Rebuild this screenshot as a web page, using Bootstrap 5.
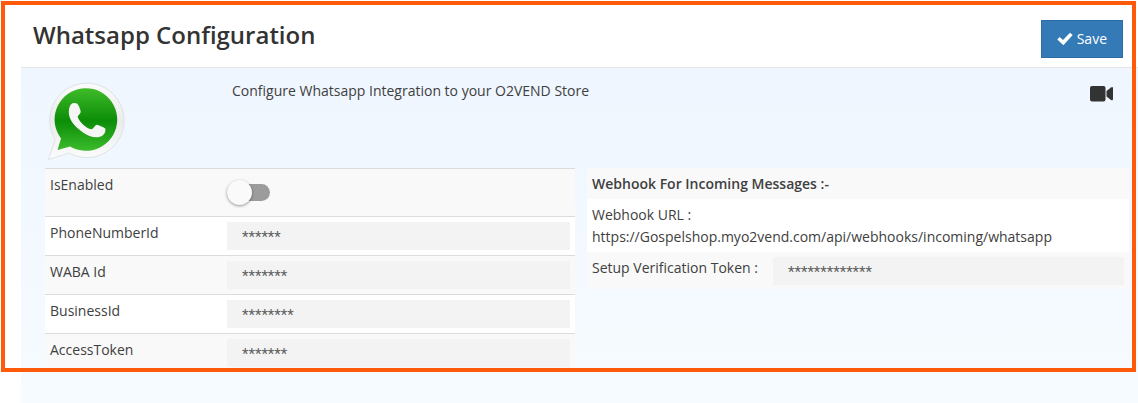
<!DOCTYPE html>
<html lang="en">
<head>
<meta charset="utf-8">
<meta name="viewport" content="width=device-width, initial-scale=1">
<title>Whatsapp Configuration</title>
<link href="https://cdn.jsdelivr.net/npm/bootstrap@5.3.0/dist/css/bootstrap.min.css" rel="stylesheet">
<style>
  body { font-family: "Open Sans", "Noto Sans", sans-serif; font-size: 14px; line-height: 22px; color: #404040; background: #fff; }
  .page-shell { padding-left: 21px; }
  .highlight-frame { position: absolute; inset: 1px 2px 31px 1px; border: 4px solid #ff5a0a; pointer-events: none; }
  .page-header { padding: 20px 15px 9px 12px; border-bottom: 1px solid #e2e5e8; }
  .page-title { font-size: 24px; line-height: 30px; font-weight: 600; color: #333; }
  .btn-save { --bs-btn-color: #fff; --bs-btn-bg: #337ab7; --bs-btn-border-color: #2e6da4; --bs-btn-hover-color: #fff; --bs-btn-hover-bg: #286090; --bs-btn-border-radius: 0;
    --bs-btn-padding-x: 15px; --bs-btn-padding-y: 7px; --bs-btn-font-size: 14px; --bs-btn-line-height: 22px; }
  .page-main { background: linear-gradient(#eff6ff, #f6fbff); padding: 12px 9px 0 24px; }
  .intro { height: 88px; }
  .intro-logo { width: 187px; }
  .intro-video { padding: 6px 15px 0 0; line-height: 0; }
  .panels { display: grid; grid-template-columns: 530fr 542fr; gap: 12px; align-items: start; }
  .settings { table-layout: fixed; width: 100%; }
  .settings th, .settings td { padding: 5px; vertical-align: top; font-weight: 400; }
  .settings tr { border-top: 1px solid #dcdcdc; background: #fff; }
  .settings tr:nth-child(odd) { background: #f9f9f9; }
  .settings .col-label { width: 177px; }
  .field { display: block; width: 100%; min-width: 0; height: 28px; border: 0; border-radius: 0; background: #f3f3f3; color: #606060; padding: 2px 15px 0; font-family: Roboto, sans-serif; font-size: 15px; }
  .toggle { appearance: none; display: block; width: 43px; height: 17px; margin: 10px 0; border-radius: 9px; background: #9c9c9c; }
  .toggle::before { content: ""; display: block; width: 25px; height: 25px; margin-top: -4px; border-radius: 50%; background: #fafafa; box-shadow: 0 1px 3px rgba(0,0,0,.4); float: left; }
  .toggle:checked::before { float: right; }
  .strip { background: #f9f9f9; padding: 5px 5px 4px; font-size: 14px; line-height: 22px; }
  .strip-white { background: #fff; }
  .token-label { width: 181px; }
</style>
</head>
<body>
<div class="page-shell position-relative min-vh-100 d-flex flex-column">
  <header class="page-header d-flex justify-content-between align-items-start">
    <h1 class="page-title mb-0">Whatsapp Configuration</h1>
    <button type="button" class="btn btn-save d-flex align-items-center gap-1">
      <svg width="16" height="14" viewBox="0 0 16 14" aria-hidden="true"><path d="M0.3 7.6 2.7 5.1 6 8.1 13 0.7 15.7 3.1 6.4 13.3Z" fill="#fff"/></svg>
      Save
    </button>
  </header>

  <main class="page-main flex-grow-1">
    <div class="intro d-flex">
      <div class="intro-logo flex-shrink-0">
        <svg width="80" height="80" viewBox="0 0 80 80" role="img" aria-label="Whatsapp">
          <defs>
            <linearGradient id="green" x1="0" y1="0" x2="0" y2="1"><stop offset="0" stop-color="#3fbb2a"/><stop offset=".52" stop-color="#0c8d08"/><stop offset="1" stop-color="#3cbb2c"/></linearGradient>
            <linearGradient id="rim" x1="0" y1="0" x2="0" y2="1"><stop offset="0" stop-color="#fbfbfb"/><stop offset=".5" stop-color="#ebebeb"/><stop offset="1" stop-color="#fcfcfc"/></linearGradient>
          </defs>
          <path d="M3.5 79.500 10 59.500A37.200 37.200 0 1 1 24 73Z" fill="url(#rim)" stroke="#dce3e8" stroke-width="1"/>
          <path d="M12.500 70 16 58.500A31.300 31.300 0 1 1 25 66.500Z" fill="url(#green)"/>
          <path d="M25.500 25C27 22.600 29.800 22.500 32 23.500 34 25.500 35.200 29 35.700 31.500 36 33.500 32.500 35.500 32.800 37.200 35 42.500 40.500 48 46.500 49.300 48.500 49 50 45 51.800 44.800 55 45.500 58.500 47.200 60.300 48.500 61 51.500 59.500 54.500 57 56 51 59 44 56.500 38 52.500 31 47.500 25 41.500 24 34.500 23.500 31 24 27.500 25.500 25Z" fill="#f6f6f6"/>
        </svg>
      </div>
      <p class="flex-grow-1 mb-0">Configure Whatsapp Integration to your O2VEND Store</p>
      <a href="#" class="intro-video" aria-label="Watch video">
        <svg width="24" height="16" viewBox="0 0 24 16" aria-hidden="true"><rect x="0" y="0" width="15.500" height="15.500" rx="2" fill="#333"/><path d="M16.500 5 21 1.400Q23 0.400 23 2.400V13Q23 15 21 14L16.500 10.500Z" fill="#333"/></svg>
      </a>
    </div>

    <div class="panels">
      <table class="settings">
        <colgroup><col class="col-label"><col></colgroup>
        <tbody>
          <tr><th scope="row"><label for="enabled">IsEnabled</label></th><td><input id="enabled" class="toggle" type="checkbox" role="switch"></td></tr>
          <tr><th scope="row"><label for="phone">PhoneNumberId</label></th><td><input id="phone" class="field" type="text" value="******"></td></tr>
          <tr><th scope="row"><label for="waba">WABA Id</label></th><td><input id="waba" class="field" type="text" value="*******"></td></tr>
          <tr><th scope="row"><label for="business">BusinessId</label></th><td><input id="business" class="field" type="text" value="********"></td></tr>
          <tr><th scope="row"><label for="access">AccessToken</label></th><td><input id="access" class="field" type="text" value="*******"></td></tr>
        </tbody>
      </table>

      <section>
        <h2 class="strip mb-0 fw-semibold">Webhook For Incoming Messages :-</h2>
        <div class="strip strip-white">Webhook URL :<br>https://Gospelshop.myo2vend.com/api/webhooks/incoming/whatsapp</div>
        <div class="strip d-flex align-items-start">
          <label for="token" class="token-label flex-shrink-0">Setup Verification Token :</label>
          <input id="token" class="field" type="text" value="*************">
        </div>
      </section>
    </div>
  </main>
  <div class="highlight-frame"></div>
</div>
<script src="https://cdn.jsdelivr.net/npm/bootstrap@5.3.0/dist/js/bootstrap.bundle.min.js"></script>
</body>
</html>
